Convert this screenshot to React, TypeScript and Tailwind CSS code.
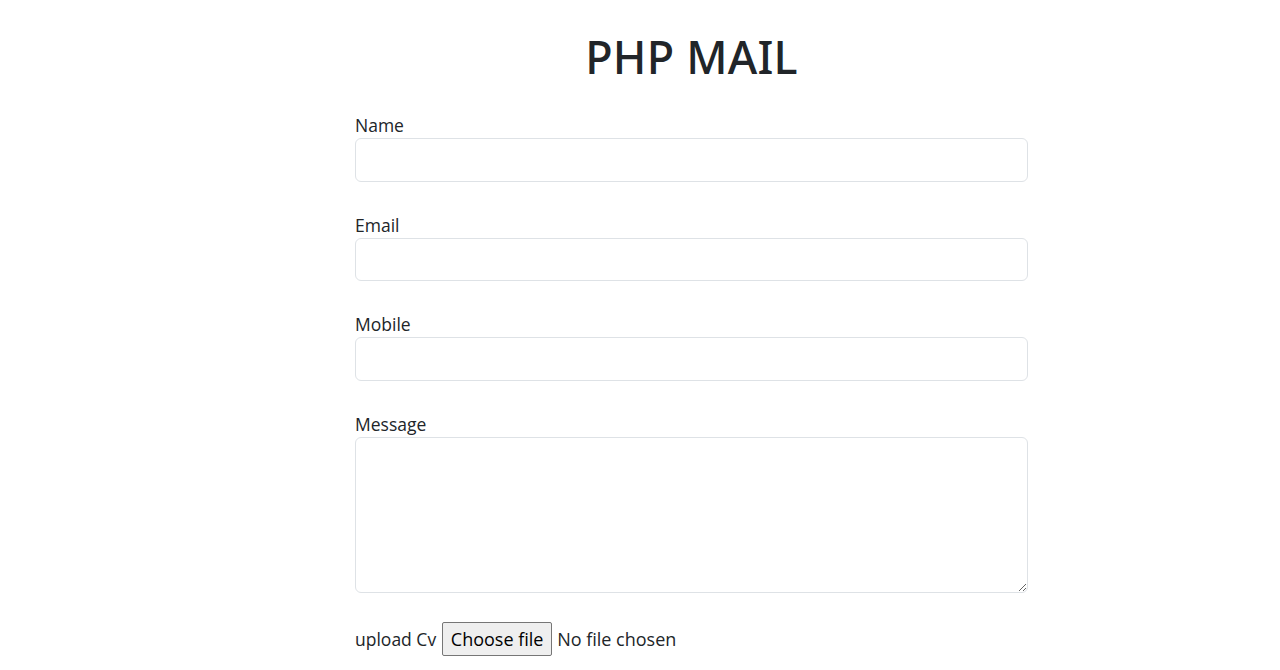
export default function App() {
  const fields = ['Name', 'Email', 'Mobile']
  return (
    <div className="min-h-[670px] bg-white text-[#212529] font-['Open_Sans','Noto_Sans',sans-serif]">
      <div className="ml-[355px] w-[673px]">
        <h1 className="pt-[26px] h-[110px] text-center text-[45px] leading-[62px] font-medium font-['Noto_Sans','Open_Sans',sans-serif] tracking-[0.2px]">PHP MAIL</h1>
        <form onSubmit={(e) => e.preventDefault()}>
          {fields.map((f) => (
            <div key={f} className="h-[99.7px]">
              <label className="block h-[28px] pt-[3px] text-[17.5px] leading-[25px]">{f}</label>
              <input
                type="text"
                className="block w-full h-[43.5px] border border-[#dee2e6] rounded-[6px] px-3 outline-none"
              />
            </div>
          ))}
          <div>
            <label className="block h-[28px] pt-[3px] text-[17.5px] leading-[25px]">Message</label>
            <textarea className="block w-full h-[156px] border border-[#dee2e6] rounded-[6px] px-3 py-2 outline-none" />
          </div>
          <div className="mt-[29px] flex items-center h-[34px] text-[17.5px]">
            <span>upload Cv</span>
            <span className="ml-[6px] h-[34px] w-[110px] justify-center flex items-center border border-[#767676] bg-[#efefef] rounded-[2px] text-[#000] text-[18px]">
              Choose file
            </span>
            <span className="ml-[5px] text-[18px]">No file chosen</span>
          </div>
        </form>
      </div>
    </div>
  )
}
